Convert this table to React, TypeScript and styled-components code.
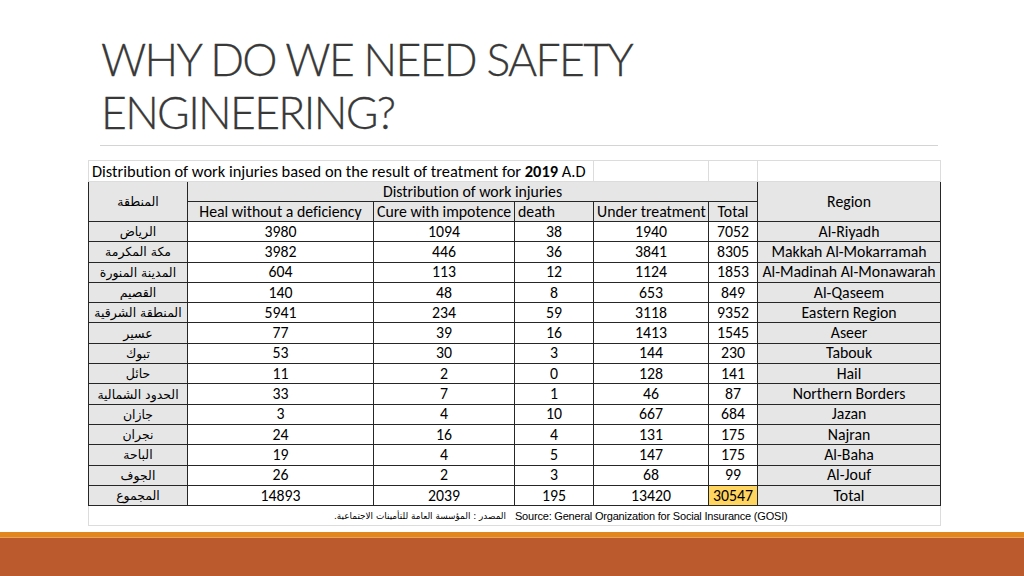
import React from "react";
import styled, { createGlobalStyle } from "styled-components";

const Global = createGlobalStyle`
  html, body { margin: 0; padding: 0; background: #ffffff; }
  #root { width: 1024px; height: 576px; }
`;

const Slide = styled.div`
  width: 1024px;
  height: 576px;
  display: flex;
  flex-direction: column;
  background: #ffffff;
  overflow: hidden;
`;

const TitleArea = styled.div`
  height: 145px;
  box-sizing: border-box;
  padding: 32px 0 0 101px;
`;

const Title = styled.h1`
  margin: 0;
  font-family: Lato, "Open Sans", sans-serif;
  font-weight: 300;
  font-size: 44.5px;
  line-height: 53px;
  color: #383838;
  letter-spacing: -1.65px;
  -webkit-text-stroke: 0.3px #383838;
`;

const Rule = styled.div`
  margin-left: 100px;
  width: 838px;
  height: 1px;
  background: #d4d4d4;
`;

const TableArea = styled.div`
  padding: 14px 0 0 88px;
`;

const Table = styled.table`
  border-collapse: collapse;
  table-layout: fixed;
  width: 852px;
  font-family: Carlito, "Open Sans", sans-serif;
  font-size: 15.8px;
  font-variant-ligatures: none;
  color: #000;
`;

type CellProps = {
  $shade?: "grey" | "white" | "gold";
  $align?: "left" | "center";
  $faint?: boolean;
  $h?: number;
  $big?: boolean;
};

const Cell = styled.td<CellProps>`
  box-sizing: border-box;
  height: ${(p) => p.$h ?? 20.3}px;
  padding: 0 3px;
  line-height: 16px;
  white-space: nowrap;
  overflow: hidden;
  font-size: ${(p) => (p.$big ? "16.4px" : "inherit")};
  text-align: ${(p) => p.$align ?? "center"};
  border: 1px solid ${(p) => (p.$faint ? "#dcdcdc" : "#262626")};
  background: ${(p) =>
    p.$shade === "grey" ? "#e6e6e6" : p.$shade === "gold" ? "#ffd45f" : "#ffffff"};
  vertical-align: middle;
`;

const Arabic = styled.span`
  font-family: "DejaVu Sans", "Noto Sans", sans-serif;
  font-size: 12.5px;
`;

const SourceLine = styled.div`
  display: flex;
  justify-content: flex-start;
  align-items: center;
  gap: 9px;
  padding-left: 242px;
`;

const SourceArabic = styled.span`
  font-family: "DejaVu Sans", sans-serif;
  font-size: 8.9px;
  color: #000;
`;

const SourceEnglish = styled.span`
  font-family: "Liberation Sans", Arial, sans-serif;
  font-size: 11px;
  letter-spacing: -0.2px;
  color: #000;
`;

const Spacer = styled.div`
  flex: 1;
`;

const StripeTop = styled.div`
  height: 5px;
  background: #e2861e;
`;

const StripeLine = styled.div`
  height: 1px;
  background: #e9a25a;
`;

const StripeBase = styled.div`
  height: 38px;
  background: #bb5a2c;
`;

const rows: [string, number, number, number, number, number, string][] = [
  ["الرياض", 3980, 1094, 38, 1940, 7052, "Al-Riyadh"],
  ["مكة المكرمة", 3982, 446, 36, 3841, 8305, "Makkah Al-Mokarramah"],
  ["المدينة المنورة", 604, 113, 12, 1124, 1853, "Al-Madinah Al-Monawarah"],
  ["القصيم", 140, 48, 8, 653, 849, "Al-Qaseem"],
  ["المنطقة الشرقية", 5941, 234, 59, 3118, 9352, "Eastern Region"],
  ["عسير", 77, 39, 16, 1413, 1545, "Aseer"],
  ["تبوك", 53, 30, 3, 144, 230, "Tabouk"],
  ["حائل", 11, 2, 0, 128, 141, "Hail"],
  ["الحدود الشمالية", 33, 7, 1, 46, 87, "Northern Borders"],
  ["جازان", 3, 4, 10, 667, 684, "Jazan"],
  ["نجران", 24, 16, 4, 131, 175, "Najran"],
  ["الباحة", 19, 4, 5, 147, 175, "Al-Baha"],
  ["الجوف", 26, 2, 3, 68, 99, "Al-Jouf"],
  ["المجموع", 14893, 2039, 195, 13420, 30547, "Total"],
];

const colWidths = [99, 186, 141, 79, 115, 49, 183];

export default function App() {
  return (
    <>
      <Global />
      <Slide>
        <TitleArea>
          <Title>
            WHY DO WE NEED SAFETY
            <br />
            ENGINEERING?
          </Title>
        </TitleArea>
        <Rule />
        <TableArea>
          <Table>
            <colgroup>
              {colWidths.map((w, i) => (
                <col key={i} style={{ width: w }} />
              ))}
            </colgroup>
            <tbody>
              <tr>
                <Cell colSpan={4} $faint $big $align="left" $h={21}>
                  Distribution of work injuries based on the result of treatment for <b>2019</b> A.D
                </Cell>
                <Cell $faint $h={21} />
                <Cell $faint $h={21} />
                <Cell $faint $h={21} />
              </tr>
              <tr>
                <Cell rowSpan={2} $shade="grey">
                  <Arabic>المنطقة</Arabic>
                </Cell>
                <Cell colSpan={5} $shade="grey" $h={20}>
                  Distribution of work injuries
                </Cell>
                <Cell rowSpan={2} $shade="grey">
                  Region
                </Cell>
              </tr>
              <tr>
                <Cell $shade="grey" $h={20}>Heal without a deficiency</Cell>
                <Cell $shade="grey" $align="left" $h={20}>Cure with impotence</Cell>
                <Cell $shade="grey" $align="left" $h={20}>death</Cell>
                <Cell $shade="grey" $h={20}>Under treatment</Cell>
                <Cell $shade="grey" $h={20}>Total</Cell>
              </tr>
              {rows.map((r, i) => (
                <tr key={i}>
                  <Cell $shade="grey">
                    <Arabic>{r[0]}</Arabic>
                  </Cell>
                  <Cell>{r[1]}</Cell>
                  <Cell>{r[2]}</Cell>
                  <Cell>{r[3]}</Cell>
                  <Cell>{r[4]}</Cell>
                  <Cell $shade={i === rows.length - 1 ? "gold" : "white"}>{r[5]}</Cell>
                  <Cell $shade="grey">{r[6]}</Cell>
                </tr>
              ))}
              <tr>
                <Cell colSpan={7} $faint $h={20}>
                  <SourceLine>
                    <SourceArabic dir="rtl">المصدر : المؤسسة العامة للتأمينات الاجتماعية.</SourceArabic>
                    <SourceEnglish>Source: General Organization for Social Insurance (GOSI)</SourceEnglish>
                  </SourceLine>
                </Cell>
              </tr>
            </tbody>
          </Table>
        </TableArea>
        <Spacer />
        <StripeTop />
        <StripeLine />
        <StripeBase />
      </Slide>
    </>
  );
}
